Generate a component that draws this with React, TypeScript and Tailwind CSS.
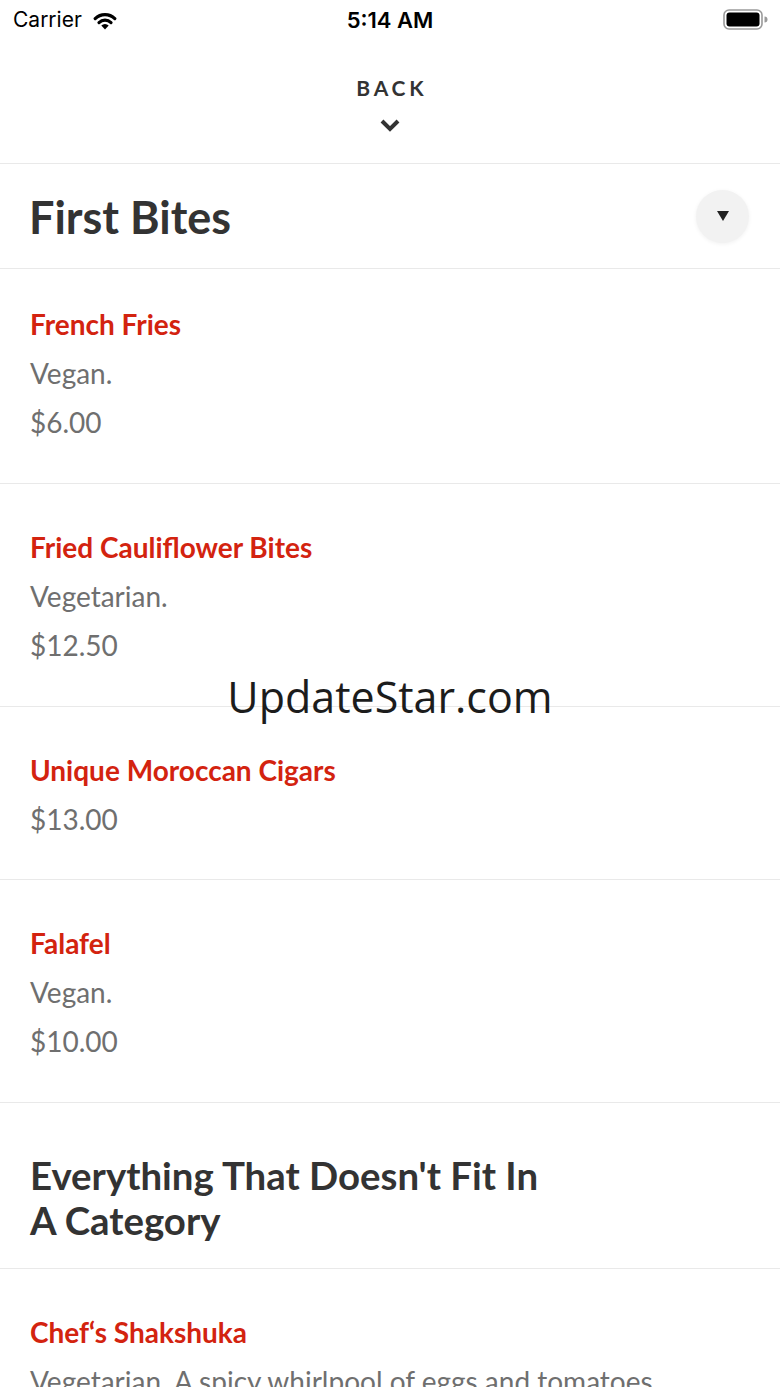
import React from "react";

type MenuItem = {
  name: string;
  description?: string;
  price?: string;
};

const firstBites: MenuItem[] = [
  { name: "French Fries", description: "Vegan.", price: "$6.00" },
  { name: "Fried Cauliflower Bites", description: "Vegetarian.", price: "$12.50" },
  { name: "Unique Moroccan Cigars", price: "$13.00" },
  { name: "Falafel", description: "Vegan.", price: "$10.00" },
];

const misc: MenuItem[] = [
  {
    name: "Chef‘s Shakshuka",
    description: "Vegetarian. A spicy whirlpool of eggs and tomatoes. Accompanied by warm bread.",
    price: "$14.00",
  },
];

function WifiIcon() {
  return (
    <svg width="24" height="19" viewBox="0 0 24 19" className="text-black">
      <path d="M2.2 7.6 A14 14 0 0 1 21.8 7.6" fill="none" stroke="currentColor" strokeWidth="3.2" strokeLinecap="round" />
      <path d="M6 11.6 A8.6 8.6 0 0 1 18 11.6" fill="none" stroke="currentColor" strokeWidth="3.2" strokeLinecap="round" />
      <path d="M12 18.4 L8.3 14.6 A5.2 5.2 0 0 1 15.7 14.6 Z" fill="currentColor" />
    </svg>
  );
}

function BatteryIcon() {
  return (
    <svg width="46" height="22" viewBox="0 0 46 22">
      <rect x="1" y="1" width="38" height="19" rx="5" fill="none" stroke="#9a9a9a" strokeWidth="1.6" />
      <rect x="3.5" y="3.5" width="33" height="14" rx="3" fill="#000" />
      <path d="M41.5 7.5 a2.5 2.5 0 0 1 0 6 Z" fill="#9a9a9a" />
    </svg>
  );
}

function ItemRow({ item, first }: { item: MenuItem; first?: boolean }) {
  return (
    <div
      className={`px-[30px] ${first ? "pt-[31px] pb-[36px]" : "pt-[39px] pb-[35.5px]"} border-b border-[#e9e9e9] text-[28px] leading-[49px]`}
    >
      <p className="font-bold text-[#d3230f]">{item.name}</p>
      {item.description && <p className="text-[#6f6f6f]">{item.description}</p>}
      {item.price && <p className="text-[#6f6f6f]">{item.price}</p>}
    </div>
  );
}

export default function App() {
  return (
    <div className="relative w-[780px] h-[1387px] overflow-hidden bg-white font-['Lato',sans-serif]">
      {/* Status bar */}
      <div className="relative h-[40px] flex items-center px-[13px] font-['Inter','Roboto',sans-serif]">
        <div className="flex items-center gap-[11px]">
          <span className="text-[21px] text-black">Carrier</span>
          <WifiIcon />
        </div>
        <span className="absolute left-0 right-0 text-center text-[22px] font-semibold text-black pointer-events-none">
          5:14 AM
        </span>
        <div className="ml-auto mr-[-2px] flex items-center">
          <BatteryIcon />
        </div>
      </div>

      {/* Back */}
      <div className="h-[124px] border-b border-[#e9e9e9] flex flex-col items-center pt-[36px]">
        <span className="text-[21px] leading-[24px] font-bold tracking-[0.18em] pl-[0.18em] text-[#333333]">BACK</span>
        <svg width="22" height="14" viewBox="0 0 22 14" className="mt-[18px] text-[#333333]">
          <polyline points="3,3 11,11 19,3" fill="none" stroke="currentColor" strokeWidth="4" />
        </svg>
      </div>

      {/* Section header */}
      <div className="h-[105px] border-b border-[#e9e9e9] flex items-center justify-between pl-[29px] pr-[31px]">
        <h1 className="text-[45px] leading-[52px] font-bold text-[#333333] pt-[2px]">First Bites</h1>
        <button className="w-[53px] h-[53px] rounded-full bg-[#f2f2f2] shadow-[0_1px_4px_rgba(0,0,0,0.06)] flex items-center justify-center">
          <svg width="12" height="10" viewBox="0 0 12 10">
            <polygon points="0,0 12,0 6,10" fill="#222222" />
          </svg>
        </button>
      </div>

      {firstBites.map((item, i) => (
        <ItemRow key={item.name} item={item} first={i === 0} />
      ))}

      <div className="pt-[50px] pb-[25px] pl-[30px] border-b border-[#e9e9e9]">
        <h2 className="max-w-[530px] text-[38.4px] leading-[45px] font-bold text-[#333333]">
          Everything That Doesn't Fit In A Category
        </h2>
      </div>

      {misc.map((item) => (
        <ItemRow key={item.name} item={item} />
      ))}

      {/* Watermark */}
      <div className="absolute left-0 right-0 top-[668px] text-center text-[43px] leading-[58px] text-[#1c1c1c] font-['Open_Sans',sans-serif] pointer-events-none">
        UpdateStar.com
      </div>
    </div>
  );
}
